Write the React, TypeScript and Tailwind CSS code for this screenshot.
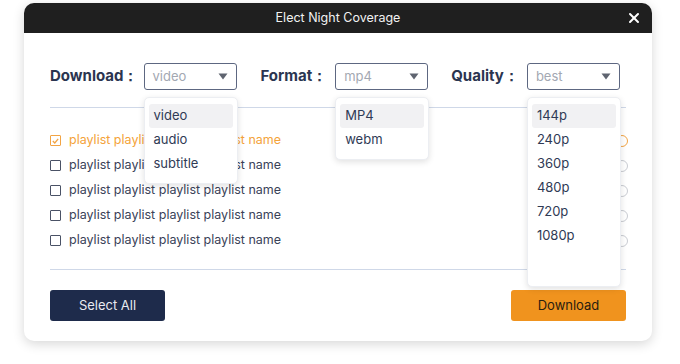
import React from "react";
import { X } from "lucide-react";

const font = { fontFamily: "Inter, 'Liberation Sans', sans-serif" };

const rows = [0, 1, 2, 3, 4];

const Caret = () => (
  <svg width="10" height="7" viewBox="0 0 10 7" className="shrink-0">
    <path d="M0.5 0.5 L9.5 0.5 L5 6.5 Z" fill="#5f6470" />
  </svg>
);

const Menu = ({ items, extra }: { items: string[]; extra?: string }) => (
  <div
    className={`absolute left-0 top-[34px] z-10 w-[94px] rounded-[5px] border border-[#eceef2] bg-white px-[4px] pt-[6px] pb-[7px] shadow-[0_2px_6px_rgba(0,0,0,0.12)] ${extra ?? ""}`}
  >
    {items.map((it, i) => (
      <div
        key={it}
        className={`flex h-[24px] items-center rounded-[3px] pl-[5px] text-[13px] text-[#2f3a55] ${
          i === 0 ? "bg-[#f1f1f3]" : ""
        }`}
      >
        {it}
      </div>
    ))}
  </div>
);

const Field = ({
  label,
  value,
  items,
  extra,
  gap,
}: {
  label: string;
  value: string;
  items: string[];
  extra?: string;
  gap: string;
}) => (
  <div className={`flex items-center ${gap}`}>
    <span className="text-[15px] font-bold text-[#2b3550]">{label}</span>
    <div className="relative">
      <div className="flex h-[27px] w-[93px] items-center justify-between rounded-[3px] border-[1.5px] border-[#5d6781] pl-[8px] pr-[8px]">
        <span className="text-[13px] text-[#a3a8b2]">{value}</span>
        <Caret />
      </div>
      <Menu items={items} extra={extra} />
    </div>
  </div>
);

export default function App() {
  return (
    <div className="h-[364px] w-[680px] bg-white pl-[24px] pt-[3px]" style={font}>
      <div className="w-[628px] overflow-visible rounded-[10px] bg-white shadow-[0_3px_12px_rgba(0,0,0,0.16)]">
        <div className="relative flex h-[30px] items-center justify-center rounded-t-[10px] bg-[#1f1f1f]">
          <span className="text-[12.5px] text-[#f2f2f2]">Elect Night Coverage</span>
          <X className="absolute right-[10px] top-[7px] text-white" size={16} strokeWidth={3} />
        </div>

        <div className="px-[26px] pt-[30px] pb-[20px]">
          <div className="flex items-center">
            <Field label="Download：" value="video" items={["video", "audio", "subtitle"]} gap="gap-[5px]" />
            <div className="ml-[24px]">
              <Field label="Format：" value="mp4" items={["MP4", "webm"]} gap="gap-[8px]" />
            </div>
            <div className="ml-[23px]">
              <Field
                label="Quality："
                value="best"
                items={["144p", "240p", "360p", "480p", "720p", "1080p"]}
                extra="pb-[38px]"
                gap="gap-[8px]"
              />
            </div>
          </div>

          <div className="mt-[17px] h-px bg-[#cfd8e8]" />

          <div className="mt-[20px] flex flex-col">
            {rows.map((r) => {
              const on = r === 0;
              return (
                <div key={r} className="flex h-[25px] items-center justify-between">
                  <div className="flex items-center gap-[8px]">
                    <span
                      className={`flex h-[11px] w-[11px] items-center justify-center rounded-[1px] border-[1.5px] ${
                        on ? "border-[#f2a444]" : "border-[#4a5266]"
                      }`}
                    >
                      {on && (
                        <svg width="7" height="6" viewBox="0 0 7 6">
                          <path d="M0.8 3 L2.8 5 L6.2 0.8" fill="none" stroke="#f2a444" strokeWidth="1.3" />
                        </svg>
                      )}
                    </span>
                    <span className={`text-[12.5px] ${on ? "text-[#f4a33a]" : "text-[#3a4258]"}`}>
                      playlist playlist playlist playlist name
                    </span>
                  </div>
                  <span
                    className={`mr-[-2px] h-[12px] w-[12px] rounded-full border-[1.5px] ${
                      on ? "border-[#f2a444]" : "border-[#c9ccd2]"
                    }`}
                  />
                </div>
              );
            })}
          </div>

          <div className="mt-[16px] h-px bg-[#cfd8e8]" />

          <div className="mt-[20px] flex items-center justify-between">
            <button className="h-[31px] w-[115px] rounded-[3px] bg-[#1e2b4b] text-[13px] text-[#e8eaf0]">
              Select All
            </button>
            <button className="h-[31px] w-[115px] rounded-[3px] bg-[#f0931e] text-[13px] text-[#2a2010]">
              Download
            </button>
          </div>
        </div>
      </div>
    </div>
  );
}
